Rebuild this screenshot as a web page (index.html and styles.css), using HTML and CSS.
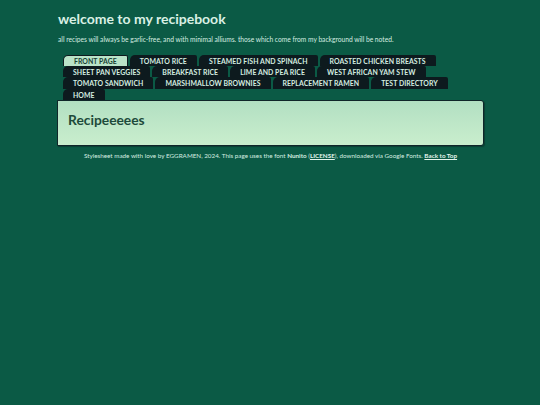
FILE: index.html
```html
<!DOCTYPE html>
<html lang="en">

<head>
    <meta charset="UTF-8">
    <meta name="viewport" content="width=device-width, initial-scale=1.0">
    <title>welcome to my recipebook</title>
    <link rel="stylesheet" href="styles.css">
</head>

<body>
    <div class="wrapper">
        <header class="header">
            <h1>welcome to my recipebook</h1>
            <p>all recipes will always be garlic-free, and with minimal alliums. those which come from my background will be noted.</p>
        </header>

        <ul class="tabs">
            <li class="active"><a href="#">Front Page</a></li>
            <li><a href="#">Tomato Rice</a></li>
            <li><a href="#">Steamed Fish and Spinach</a></li>
            <li><a href="#">Roasted Chicken Breasts</a></li>
            <li><a href="#">Sheet Pan Veggies</a></li>
            <li><a href="#">Breakfast Rice</a></li>
            <li><a href="#">Lime and Pea Rice</a></li>
            <li><a href="#">West African Yam Stew</a></li>
            <li><a href="#">Tomato Sandwich</a></li>
            <li><a href="#">Marshmallow Brownies</a></li>
            <li><a href="#">Replacement Ramen</a></li>
            <li><a href="#">Test Directory</a></li>
            <li><a href="#">Home</a></li>
        </ul>

        <main class="panel">
            <h2>Recipeeeees</h2>
        </main>

        <footer class="footer">
            Stylesheet made with love by EGGRAMEN, 2024. This page uses the font <b>Nunito</b>
            (<a href="#">LICENSE</a>), downloaded via Google Fonts. <a href="#">Back to Top</a>
        </footer>
    </div>
</body>

</html>
```
FILE: styles.css
```css
* {
    margin: 0;
    padding: 0;
    box-sizing: border-box;
}

body {
    background-color: #0b5a45;
    color: #d5ede0;
    font-family: Lato, "Open Sans", sans-serif;
}

.wrapper {
    width: 427px;
    margin-left: 57px;
}

.header {
    padding-top: 10px;
    height: 55px;
}

.header h1 {
    margin-left: 1px;
    font-size: 14px;
    line-height: 17px;
    font-weight: 700;
    color: #d9f0e4;
}

.header p {
    margin-left: 1px;
    margin-top: 8px;
    font-size: 6.66px;
    line-height: 9px;
    white-space: nowrap;
}

.tabs {
    display: flex;
    flex-wrap: wrap;
    align-content: flex-start;
    list-style: none;
    height: 45px;
    padding: 0 12px 0 6px;
}

.tabs li {
    height: 11.2px;
    margin-right: 2px;
    background-color: #0d1a1e;
    border-radius: 5px 2px 0 0;
}

.tabs a {
    display: block;
    padding: 0 10px;
    font-size: 6.9px;
    letter-spacing: 0.05px;
    line-height: 13px;
    font-weight: 700;
    text-transform: uppercase;
    text-decoration: none;
    color: #d5ede0;
    white-space: nowrap;
}

.tabs li.active {
    background-color: #b9e3c8;
    border: 1px solid #0d1a1e;
    border-bottom: none;
}

.tabs li.active a {
    color: #173f33;
    padding: 0 10px;
    line-height: 11px;
}

.panel {
    height: 46px;
    padding: 10px;
    background: linear-gradient(#b2dfc2, #c9eecd);
    border: 1px solid #10262a;
    border-radius: 0 3px 3px 0;
    box-shadow: 1px 1px 1px #0a3f32;
}

.panel h2 {
    font-size: 13.8px;
    line-height: 18px;
    font-weight: 700;
    color: #1d4a3a;
}

.footer {
    margin-top: 6px;
    font-size: 6.3px;
    line-height: 8px;
    text-align: center;
    white-space: nowrap;
}

.footer a {
    color: #e4f5ec;
    font-weight: 700;
}
```
